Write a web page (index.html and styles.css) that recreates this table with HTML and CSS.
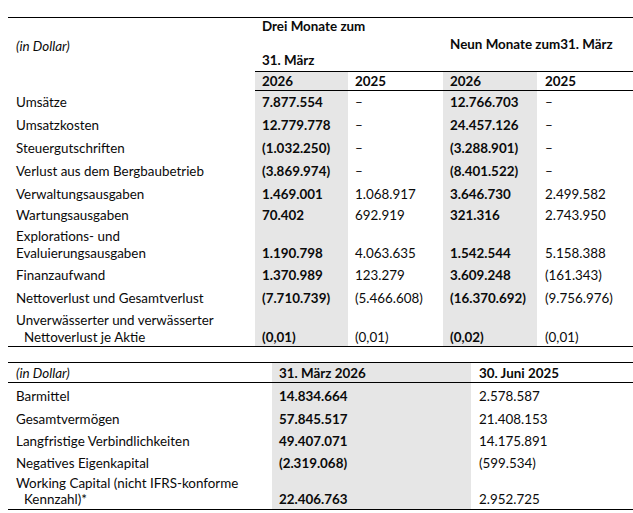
FILE: index.html
```html
<!DOCTYPE html>
<html lang="de">
<head>
<meta charset="utf-8">
<title>Finanzkennzahlen</title>
<link rel="stylesheet" href="styles.css">
</head>
<body>
<table class="fin t1">
  <colgroup>
    <col class="w-label"><col class="w-a"><col class="w-b"><col class="w-c"><col class="w-d">
  </colgroup>
  <tr class="h1">
    <td class="unit">(in Dollar)</td>
    <td class="period b" colspan="2"><span class="pl">Drei Monate zum</span><span class="pl"> </span><span class="pl">31. März</span></td>
    <td class="period mid b" colspan="2">Neun Monate zum31. März</td>
  </tr>
  <tr class="h2">
    <td class="nob"></td>
    <td class="cur b">2026</td><td class="b">2025</td><td class="cur b">2026</td><td class="b">2025</td>
  </tr>
  <tr class="r"><td>Umsätze</td><td class="cur b">7.877.554</td><td>–</td><td class="cur b">12.766.703</td><td>–</td></tr>
  <tr class="r"><td>Umsatzkosten</td><td class="cur b">12.779.778</td><td>–</td><td class="cur b">24.457.126</td><td>–</td></tr>
  <tr class="r"><td>Steuergutschriften</td><td class="cur b">(1.032.250)</td><td>–</td><td class="cur b">(3.288.901)</td><td>–</td></tr>
  <tr class="r"><td>Verlust aus dem Bergbaubetrieb</td><td class="cur b">(3.869.974)</td><td>–</td><td class="cur b">(8.401.522)</td><td>–</td></tr>
  <tr class="r"><td>Verwaltungsausgaben</td><td class="cur b">1.469.001</td><td>1.068.917</td><td class="cur b">3.646.730</td><td>2.499.582</td></tr>
  <tr class="r short"><td>Wartungsausgaben</td><td class="cur b">70.402</td><td>692.919</td><td class="cur b">321.316</td><td>2.743.950</td></tr>
  <tr class="r two"><td>Explorations- und<br>Evaluierungsausgaben</td><td class="cur b">1.190.798</td><td>4.063.635</td><td class="cur b">1.542.544</td><td>5.158.388</td></tr>
  <tr class="r"><td>Finanzaufwand</td><td class="cur b">1.370.989</td><td>123.279</td><td class="cur b">3.609.248</td><td>(161.343)</td></tr>
  <tr class="r"><td>Nettoverlust und Gesamtverlust</td><td class="cur b">(7.710.739)</td><td>(5.466.608)</td><td class="cur b">(16.370.692)</td><td>(9.756.976)</td></tr>
  <tr class="r two last"><td>Unverwässerter und verwässerter<br><span class="ind">Nettoverlust je Aktie</span></td><td class="cur b">(0,01)</td><td>(0,01)</td><td class="cur b">(0,02)</td><td>(0,01)</td></tr>
</table>

<table class="fin t2">
  <colgroup>
    <col class="w2-label"><col class="w2-a"><col class="w2-b">
  </colgroup>
  <tr class="hh">
    <td class="unit">(in Dollar)</td><td class="cur b">31. März 2026</td><td class="b">30. Juni 2025</td>
  </tr>
  <tr class="r first"><td>Barmittel</td><td class="cur b">14.834.664</td><td>2.578.587</td></tr>
  <tr class="r"><td>Gesamtvermögen</td><td class="cur b">57.845.517</td><td>21.408.153</td></tr>
  <tr class="r mid2"><td>Langfristige Verbindlichkeiten</td><td class="cur b">49.407.071</td><td>14.175.891</td></tr>
  <tr class="r mid2"><td>Negatives Eigenkapital</td><td class="cur b">(2.319.068)</td><td>(599.534)</td></tr>
  <tr class="r two last"><td>Working Capital (nicht IFRS-konforme<br><span class="ind">Kennzahl)*</span></td><td class="cur b">22.406.763</td><td>2.952.725</td></tr>
</table>
</body>
</html>
```

FILE: styles.css
```css
html, body {
  background: #ffffff;
}
body {
  margin: 17px 0 0 8px;
  font-family: Lato, "Open Sans", sans-serif;
  font-size: 13.4px;
  color: #0a0a0a;
}
.fin {
  border-collapse: collapse;
  table-layout: fixed;
  width: 625px;
}
.t2 {
  margin-top: 15px;
}
.w-label { width: 247px; }
.w-a { width: 93px; }
.w-b { width: 95px; }
.w-c { width: 94px; }
.w-d { width: 96px; }
.w2-label { width: 264px; }
.w2-a { width: 199px; }
.w2-b { width: 162px; }

.fin td {
  padding: 0 0 3px 8px;
  line-height: 18px;
  vertical-align: bottom;
  white-space: nowrap;
}
.fin tr:first-child td {
  border-top: 1px solid #000;
}
.fin tr.last td {
  border-bottom: 1px solid #000;
}
.b { font-weight: 700; }
.cur { background: #e6e6e6; }
.ind { padding-left: 8px; }

/* table 1 header */
.h1 td {
  height: 51px;
  padding: 0 0 0 8px;
  vertical-align: middle;
}
.h1 .unit {
  font-style: italic;
  padding-top: 2px;
}
.h1 .period {
  border-bottom: 1px solid #000;
  vertical-align: top;
  padding-left: 7px;
}
.h1 .period.mid {
  vertical-align: middle;
  padding-top: 0;
  padding-left: 7px;
}
.pl {
  display: block;
  line-height: 17px;
  min-height: 17px;
}
.h2 td {
  height: 18px;
  padding-bottom: 0;
  border-bottom: 1px solid #000;
}
.h2 td.nob { border-bottom: none; }
.t1 .r td:nth-child(n+2), .t1 .h2 td:nth-child(n+2) { padding-left: 7px; }
.t1 .r td:nth-child(5), .t1 .h2 td:nth-child(5) { padding-left: 8px; }

.r td { height: 20px; }
.r.short td { height: 18px; }
.t1 .r.two td { height: 35px; line-height: 17px; padding-bottom: 2px; }
.t1 .r.last td { height: 36px; line-height: 17px; padding-bottom: 0; }

/* table 2 */
.hh td {
  height: 19px;
  padding-bottom: 0;
  border-bottom: 1px solid #000;
}
.hh .unit { font-style: italic; }
.t2 td:nth-child(2) { padding-left: 7px; }
.t2 .r.first td { height: 22px; }
.t2 .r.mid2 td { height: 19px; }
.t2 .r.last td { height: 32px; line-height: 16px; padding-bottom: 2px; }
```
